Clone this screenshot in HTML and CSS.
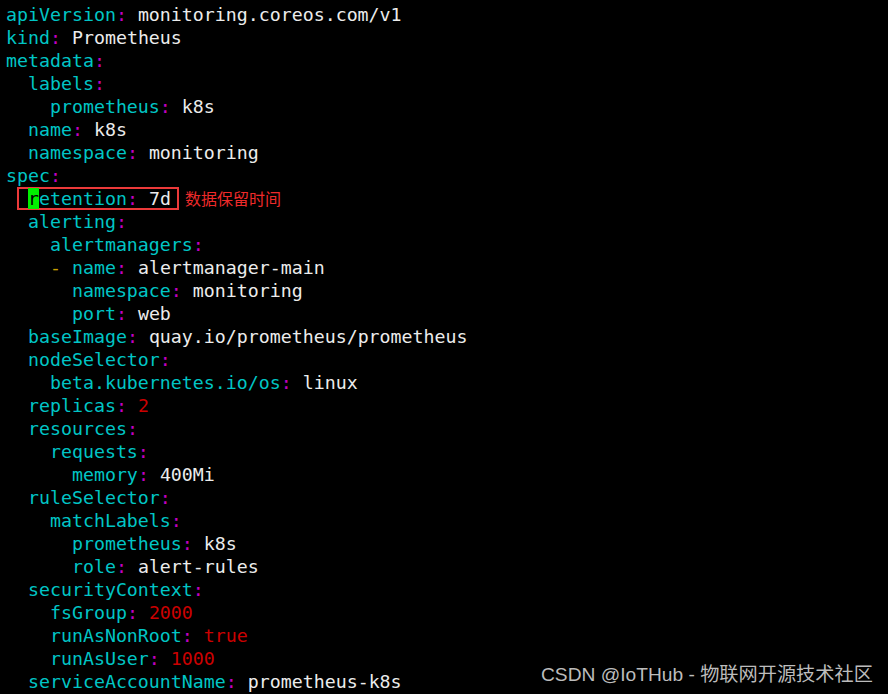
FILE: index.html
```html
<!DOCTYPE html>
<html>
<head>
<meta charset="utf-8">
<link rel="stylesheet" href="styles.css">
</head>
<body>
<div class="term">
<div class="ln"><span class="k">apiVersion</span><span class="c">:</span> <span class="v">monitoring.coreos.com/v1</span></div>
<div class="ln"><span class="k">kind</span><span class="c">:</span> <span class="v">Prometheus</span></div>
<div class="ln"><span class="k">metadata</span><span class="c">:</span></div>
<div class="ln">  <span class="k">labels</span><span class="c">:</span></div>
<div class="ln">    <span class="k">prometheus</span><span class="c">:</span> <span class="v">k8s</span></div>
<div class="ln">  <span class="k">name</span><span class="c">:</span> <span class="v">k8s</span></div>
<div class="ln">  <span class="k">namespace</span><span class="c">:</span> <span class="v">monitoring</span></div>
<div class="ln"><span class="k">spec</span><span class="c">:</span></div>
<div class="ln"> <span class="box"><span class="cur">r</span><span class="k">etention</span><span class="c">:</span> <span class="v">7d</span></span><span class="note">数据保留时间</span></div>
<div class="ln">  <span class="k">alerting</span><span class="c">:</span></div>
<div class="ln">    <span class="k">alertmanagers</span><span class="c">:</span></div>
<div class="ln">    <span class="y">-</span> <span class="k">name</span><span class="c">:</span> <span class="v">alertmanager-main</span></div>
<div class="ln">      <span class="k">namespace</span><span class="c">:</span> <span class="v">monitoring</span></div>
<div class="ln">      <span class="k">port</span><span class="c">:</span> <span class="v">web</span></div>
<div class="ln">  <span class="k">baseImage</span><span class="c">:</span> <span class="v">quay.io/prometheus/prometheus</span></div>
<div class="ln">  <span class="k">nodeSelector</span><span class="c">:</span></div>
<div class="ln">    <span class="k">beta.kubernetes.io/os</span><span class="c">:</span> <span class="v">linux</span></div>
<div class="ln">  <span class="k">replicas</span><span class="c">:</span> <span class="r">2</span></div>
<div class="ln">  <span class="k">resources</span><span class="c">:</span></div>
<div class="ln">    <span class="k">requests</span><span class="c">:</span></div>
<div class="ln">      <span class="k">memory</span><span class="c">:</span> <span class="v">400Mi</span></div>
<div class="ln">  <span class="k">ruleSelector</span><span class="c">:</span></div>
<div class="ln">    <span class="k">matchLabels</span><span class="c">:</span></div>
<div class="ln">      <span class="k">prometheus</span><span class="c">:</span> <span class="v">k8s</span></div>
<div class="ln">      <span class="k">role</span><span class="c">:</span> <span class="v">alert-rules</span></div>
<div class="ln">  <span class="k">securityContext</span><span class="c">:</span></div>
<div class="ln">    <span class="k">fsGroup</span><span class="c">:</span> <span class="r">2000</span></div>
<div class="ln">    <span class="k">runAsNonRoot</span><span class="c">:</span> <span class="r">true</span></div>
<div class="ln">    <span class="k">runAsUser</span><span class="c">:</span> <span class="r">1000</span></div>
<div class="ln">  <span class="k">serviceAccountName</span><span class="c">:</span> <span class="v">prometheus-k8s</span></div>
</div>
<div class="wm">CSDN @IoTHub - 物联网开源技术社区</div>
</body>
</html>
```
FILE: styles.css
```css
html, body {
  margin: 0;
  padding: 0;
  background: #000;
  width: 888px;
  height: 694px;
  overflow: hidden;
}
body {
  position: relative;
}
.term {
  padding: 3px 0 0 6px;
  font-family: "DejaVu Sans Mono", monospace;
  font-size: 18.25px;
  line-height: 23px;
  color: #e8e8e8;
}
.ln {
  height: 23px;
  white-space: pre;
}
.k { color: #00c5c5; }
.c { color: #c000c0; }
.v { color: #ececec; }
.r { color: #cc0000; }
.y { color: #c8a000; }
.box {
  display: inline-block;
  vertical-align: top;
  line-height: 19px;
  border: 2px solid #ec3a3a;
  padding: 0 6px 0 9px;
}
.cur {
  background: #00f000;
  color: #000;
}
.note {
  display: inline-block;
  vertical-align: top;
  margin-left: 6px;
  font-family: "Noto Sans CJK SC", sans-serif;
  font-size: 16px;
  line-height: 22px;
  color: #ee2a2a;
}
.wm {
  position: absolute;
  left: 541px;
  top: 662px;
  font-family: "Liberation Sans", "Noto Sans CJK SC", sans-serif;
  font-size: 19.2px;
  line-height: 26px;
  color: #bcbcbc;
  white-space: nowrap;
}
```
